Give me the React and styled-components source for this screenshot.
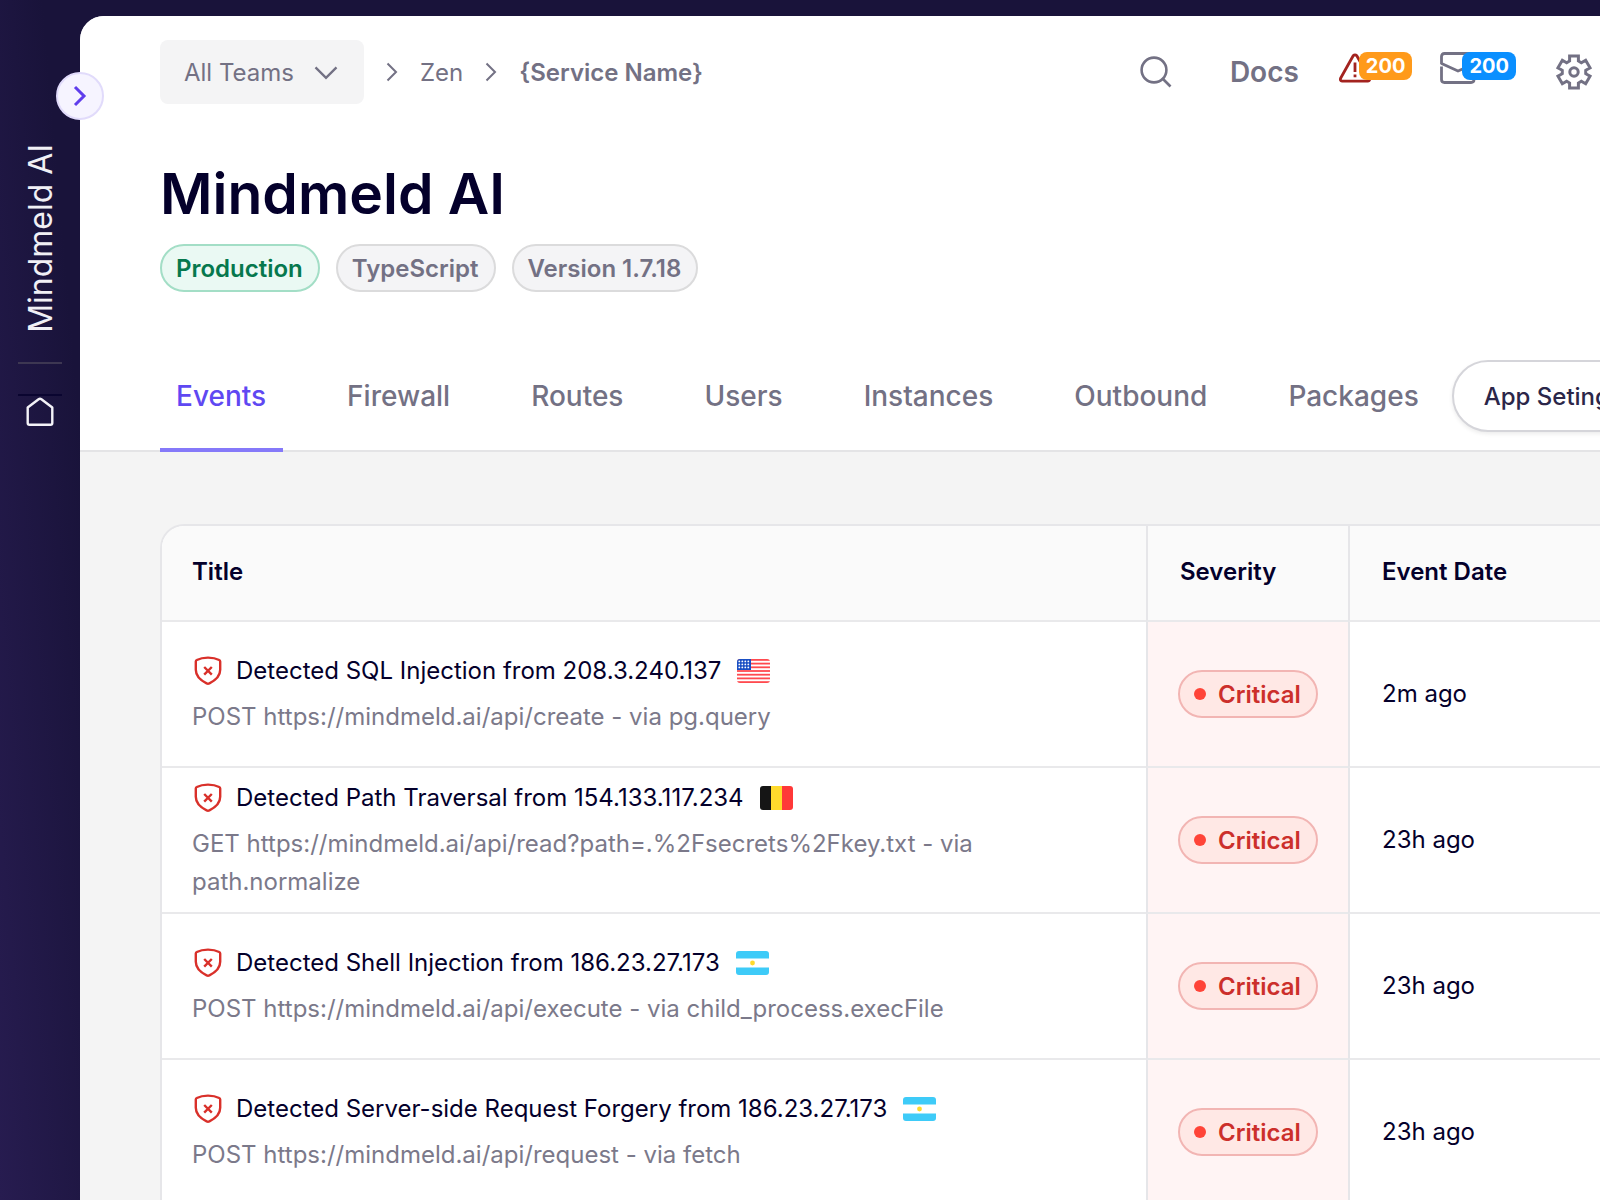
import React from "react";
import styled, { createGlobalStyle, css } from "styled-components";

const GlobalStyle = createGlobalStyle`
  *, *::before, *::after { box-sizing: border-box; }
  html, body { margin: 0; }
  body {
    font-family: Inter, "Liberation Sans", sans-serif;
    font-size: 24px;
    color: #04002b;
    overflow: hidden;
  }
  button, select { font: inherit; color: inherit; margin: 0; }
  svg { display: block; flex: none; }
`;

const Shell = styled.div`
  display: grid;
  grid-template-columns: 80px minmax(0, 1fr);
  height: 100vh;
  overflow: hidden;
  background: #19133a;
`;

const Sidebar = styled.aside`
  position: relative;
  z-index: 1;
  display: flex;
  flex-direction: column;
  align-items: center;
  padding-top: 144px;
  background: linear-gradient(265deg, #19133a 20%, #271c50 100%);
`;

const Toggle = styled.button`
  position: absolute;
  top: 72px;
  right: -24px;
  width: 48px;
  height: 48px;
  padding: 0;
  display: grid;
  place-items: center;
  border: 2px solid #e1dbfb;
  border-radius: 50%;
  background: #f6f4ff;
  color: #5f3dec;
`;

const Workspace = styled.div`
  writing-mode: vertical-rl;
  transform: rotate(180deg);
  padding-right: 2px;
  font-size: 32px;
  line-height: 40px;
  color: #f1f0f5;
`;

const SideRule = styled.hr`
  width: 44px;
  height: 2px;
  margin: 29px 0 30px;
  border: 0;
  background: #3d3752;
`;

const HomeLink = styled.a`
  display: grid;
  justify-items: center;
  width: 44px;
  padding-top: 1px;
  border-top: 2px solid #0a0530;
  color: #f4f3f8;
`;

const Main = styled.main`
  margin-top: 16px;
  min-width: 0;
  overflow: hidden;
  border-top-left-radius: 24px;
  background: #f4f4f4;
`;

const Top = styled.header`
  padding: 24px 0 0 80px;
  background: #ffffff;
  border-bottom: 2px solid #e4e4e6;
`;

const Bar = styled.div`
  display: flex;
  align-items: center;
  justify-content: space-between;
  padding-right: 8px;
  color: #737184;
`;

const Crumbs = styled.nav`
  display: flex;
  align-items: center;
  gap: 22px;
`;

const Crumb = styled.a`
  color: inherit;
  text-decoration: none;
  font-weight: ${(p) => (p.$current ? 600 : 400)};
`;

const TeamPicker = styled.label`
  display: grid;
  align-items: center;
  > * { grid-area: 1 / 1; }
  > svg { justify-self: end; margin-right: 24px; pointer-events: none; }
`;

const TeamSelect = styled.select`
  appearance: none;
  height: 64px;
  padding: 0 70px 0 24px;
  border: 0;
  border-radius: 8px;
  background: #f4f4f5;
`;

const Tools = styled.div`
  display: flex;
  align-items: center;
  gap: 40px;
`;

const DocsLink = styled.a`
  padding-left: 18px;
  color: inherit;
  text-decoration: none;
  font-size: 28px;
  font-weight: 600;
`;

const IconButton = styled.button`
  display: flex;
  align-items: flex-start;
  padding: 0;
  border: 0;
  background: none;
  color: inherit;
`;

const Notices = styled.div`
  display: flex;
  gap: 28px;
`;

const AlertButton = styled(IconButton)`
  color: #a3231f;
`;

const Count = styled.span`
  height: 28px;
  padding: 0 7px;
  margin: 0 0 12px -${(p) => p.$overlap}px;
  border-radius: 8px;
  background: ${(p) => p.$bg};
  color: #ffffff;
  font-size: 20px;
  line-height: 28px;
  font-weight: 700;
`;

const Title = styled.h1`
  margin: 56px 0 16px;
  font-size: 57px;
  line-height: 68px;
  font-weight: 600;
`;

const Pills = styled.div`
  display: flex;
  gap: 16px;
`;

const tones = {
  green: css`color: #06784d; background: #eaf9f3; border-color: #a3dec6;`,
  grey: css`color: #737184; background: #f4f4f6; border-color: #dbdbdc;`,
  red: css`color: #cc2f2b; background: #ffe8e5; border-color: #f2b5b3;`,
};

const Pill = styled.span`
  display: inline-flex;
  align-items: center;
  gap: 12px;
  height: 48px;
  padding: 0 15px 0 14px;
  border: 2px solid;
  border-radius: 24px;
  font-weight: 600;
  white-space: nowrap;
  ${(p) => tones[p.$tone]}
`;

const Dot = styled.i`
  width: 12px;
  height: 12px;
  border-radius: 50%;
  background: #ff4438;
`;

const TabRow = styled.div`
  display: flex;
  align-items: flex-start;
  gap: 16px;
  margin-top: 68px;
  margin-bottom: -2px;
  overflow: hidden;
`;

const Tabs = styled.nav`
  display: flex;
  flex: none;
  gap: 48px;
`;

const Tab = styled.a`
  height: 92px;
  padding: 0 17px 0 16px;
  font-size: 28px;
  line-height: 72px;
  font-weight: 500;
  color: ${(p) => (p.$active ? "#5f48f2" : "#737184")};
  text-decoration: none;
  border-bottom: 4px solid ${(p) => (p.$active ? "#8579f9" : "transparent")};
`;

const SettingsButton = styled.button`
  flex: none;
  height: 72px;
  padding: 0 30px;
  border: 2px solid #d5d5da;
  border-radius: 36px;
  background: #ffffff;
  color: #2b2649;
  font-weight: 500;
  box-shadow: 0 2px 4px rgba(0, 0, 0, 0.08);
`;

const Body = styled.section`
  padding: 72px 0 0 80px;
`;

const Card = styled.div`
  overflow: hidden;
  border: 2px solid #e6e6e9;
  border-width: 2px 0 0 2px;
  border-top-left-radius: 24px;
  background: #ffffff;
`;

const Table = styled.table`
  width: 100%;
  table-layout: fixed;
  border-collapse: separate;
  border-spacing: 0;
`;

const HeadCell = styled.th`
  width: ${(p) => p.$width || "auto"};
  height: 96px;
  padding: 0 30px 4px;
  text-align: left;
  font-weight: 600;
  background: #fafafa;
  border-bottom: 2px solid #e9e9eb;
  & + & {
    padding-left: 32px;
    border-left: 2px solid #e6e6e9;
  }
`;

const Cell = styled.td`
  height: 146px;
  padding: 0 30px;
  vertical-align: middle;
  background: #ffffff;
  border-bottom: 2px solid #e9e9eb;
`;

const SeverityCell = styled(Cell)`
  background: #fff4f4;
  border-left: 2px solid #e6e6e9;
`;

const DateCell = styled(Cell)`
  padding: 0 30px 2px 32px;
  border-left: 2px solid #e6e6e9;
`;

const EventTitle = styled.div`
  display: flex;
  align-items: center;
  gap: 12px;
  line-height: 38px;
`;

const EventDetail = styled.div`
  margin-top: 8px;
  line-height: 38px;
  color: #7b798a;
`;

const Chevron = ({ size = 24, d, width = 2 }) => (
  <svg width={size} height={size} viewBox="0 0 24 24" fill="none" stroke="currentColor" strokeWidth={width}>
    <path d={d} />
  </svg>
);

const CrumbArrow = () => (
  <svg width="12" height="20" viewBox="0 0 12 20" fill="none" stroke="currentColor" strokeWidth="2">
    <path d="M1.5 1.5 L10 10 L1.5 18.5" />
  </svg>
);

const HomeIcon = () => (
  <svg width="28" height="30" viewBox="0 0 28 30" fill="none" stroke="currentColor" strokeWidth="2.4" strokeLinejoin="round">
    <path d="M1.7 10.5 L12.6 2.2 Q14 1.2 15.4 2.2 L26.3 10.5 V26 Q26.3 27.8 24.5 27.8 H3.5 Q1.7 27.8 1.7 26 Z" />
  </svg>
);

const SearchIcon = () => (
  <svg width="32" height="32" viewBox="0 0 32 32" fill="none" stroke="currentColor" strokeWidth="2.6">
    <circle cx="14" cy="14" r="12.4" />
    <path d="M23 23 L30.5 30.5" />
  </svg>
);

const AlertIcon = () => (
  <svg width="32" height="32" viewBox="0 0 32 32" fill="none" stroke="currentColor" strokeWidth="2.8" strokeLinejoin="round">
    <path d="M14.2 3.8 Q16 1.8 17.8 3.8 L30.4 26.2 Q31.2 28.8 28.8 29.2 H3.2 Q.8 28.8 1.6 26.2 Z" />
    <path d="M16 10.5 V20 M16 22.5 V25.3" />
  </svg>
);

const MailIcon = () => (
  <svg width="36" height="32" viewBox="0 0 36 32" fill="none" stroke="currentColor" strokeWidth="2.8">
    <path d="M1.5 12 V4.5 Q1.5 1.5 4.5 1.5 H31 Q34 1.5 34 4.5 V12 L18 19 L1 11.2" />
    <path d="M1.5 14.5 V27.5 Q1.5 30.5 4.5 30.5 H31 Q34 30.5 34 27.5 V14.5" />
  </svg>
);

const toothPath = Array.from({ length: 6 }, (_, i) => {
  const turn = (i * Math.PI) / 3;
  return [[-4.4, -11], [-4.4, -16], [4.4, -16], [4.4, -11]]
    .map(([x, y]) => {
      const px = 18 + x * Math.cos(turn) - y * Math.sin(turn);
      const py = 18 + x * Math.sin(turn) + y * Math.cos(turn);
      return `${px.toFixed(2)} ${py.toFixed(2)}`;
    })
    .join(" L");
}).join(" L");

const GearIcon = () => (
  <svg width="36" height="36" viewBox="0 0 36 36" fill="none" stroke="currentColor" strokeWidth="3">
    <path d={`M${toothPath} Z`} />
    <circle cx="18" cy="18" r="4.2" />
  </svg>
);

const ShieldIcon = () => (
  <svg width="32" height="32" viewBox="0 0 32 32" fill="none" stroke="#d9302a" strokeWidth="2.4" strokeLinejoin="round">
    <path d="M16 2.6 C20.5 2.6 24.6 3.6 27.2 5 Q28.2 5.5 28.2 6.6 V14.8 C28.2 21 23.4 25.4 17.4 28.4 Q16 29.1 14.6 28.4 C8.6 25.4 3.8 21 3.8 14.8 V6.6 Q3.8 5.5 4.8 5 C7.4 3.6 11.5 2.6 16 2.6 Z" />
    <path d="M12.2 12 L19.8 19.6 M19.8 12 L12.2 19.6" />
  </svg>
);

const Flag = styled.svg.attrs({ width: 33, height: 24, viewBox: "0 0 33 24", role: "img" })`
  margin-left: 4px;
  border-radius: 3px;
`;

const flags = {
  us: (
    <Flag aria-label="United States">
      <rect width="33" height="24" fill="#ffffff" />
      {[0, 1, 2, 3, 4, 5, 6].map((n) => (
        <rect key={n} y={n * 3.7} width="33" height="1.8" fill="#ff4a4f" />
      ))}
      <rect width="14" height="11" fill="#1a4fc4" />
      {[2, 5, 8].map((y) =>
        [2, 5, 8, 11].map((x) => <circle key={`${x}-${y}`} cx={x + 0.3} cy={y + 0.4} r="0.9" fill="#ffffff" />)
      )}
    </Flag>
  ),
  be: (
    <Flag aria-label="Belgium">
      <rect width="11" height="24" fill="#151515" />
      <rect x="11" width="11" height="24" fill="#ffda2c" />
      <rect x="22" width="11" height="24" fill="#ff3838" />
    </Flag>
  ),
  ar: (
    <Flag aria-label="Argentina">
      <rect width="33" height="24" fill="#ffffff" />
      <rect width="33" height="7.5" fill="#3ecbf8" />
      <rect y="16.5" width="33" height="7.5" fill="#3ecbf8" />
      <circle cx="16.5" cy="12" r="2.4" fill="#ffda2c" />
    </Flag>
  ),
};

const tabs = ["Events", "Firewall", "Routes", "Users", "Instances", "Outbound", "Packages"];

const events = [
  { title: "Detected SQL Injection from 208.3.240.137", flag: "us", detail: "POST https://mindmeld.ai/api/create - via pg.query", date: "2m ago" },
  { title: "Detected Path Traversal from 154.133.117.234", flag: "be", detail: "GET https://mindmeld.ai/api/read?path=.%2Fsecrets%2Fkey.txt - via path.normalize", date: "23h ago" },
  { title: "Detected Shell Injection from 186.23.27.173", flag: "ar", detail: "POST https://mindmeld.ai/api/execute - via child_process.execFile", date: "23h ago" },
  { title: "Detected Server-side Request Forgery from 186.23.27.173", flag: "ar", detail: "POST https://mindmeld.ai/api/request - via fetch", date: "23h ago" },
];

export default function App() {
  return (
    <>
      <GlobalStyle />
      <Shell>
        <Sidebar>
          <Toggle aria-label="Expand sidebar">
            <Chevron d="M7 3 L16 12 L7 21" width={3} />
          </Toggle>
          <Workspace>Mindmeld AI</Workspace>
          <SideRule />
          <HomeLink href="#home" aria-label="Home">
            <HomeIcon />
          </HomeLink>
        </Sidebar>
        <Main>
          <Top>
            <Bar>
              <Crumbs aria-label="Breadcrumb">
                <TeamPicker>
                  <TeamSelect aria-label="Team" defaultValue="all">
                    <option value="all">All Teams</option>
                  </TeamSelect>
                  <Chevron size={28} d="M3 8 L12 17 L21 8" />
                </TeamPicker>
                <CrumbArrow />
                <Crumb href="#zen">Zen</Crumb>
                <CrumbArrow />
                <Crumb href="#service" $current>{"{Service Name}"}</Crumb>
              </Crumbs>
              <Tools>
                <IconButton aria-label="Search"><SearchIcon /></IconButton>
                <DocsLink href="#docs">Docs</DocsLink>
                <Notices>
                  <AlertButton aria-label="Alerts">
                    <AlertIcon />
                    <Count $bg="#ff9a1a" $overlap={12}>200</Count>
                  </AlertButton>
                  <IconButton aria-label="Messages">
                    <MailIcon />
                    <Count $bg="#0a8fff" $overlap={14}>200</Count>
                  </IconButton>
                </Notices>
                <IconButton aria-label="Settings"><GearIcon /></IconButton>
              </Tools>
            </Bar>
            <Title>Mindmeld AI</Title>
            <Pills>
              <Pill $tone="green">Production</Pill>
              <Pill $tone="grey">TypeScript</Pill>
              <Pill $tone="grey">Version 1.7.18</Pill>
            </Pills>
            <TabRow>
              <Tabs aria-label="Sections">
                {tabs.map((name, i) => (
                  <Tab key={name} href={`#${name.toLowerCase()}`} $active={i === 0}>{name}</Tab>
                ))}
              </Tabs>
              <SettingsButton>App Setings</SettingsButton>
            </TabRow>
          </Top>
          <Body>
            <Card>
              <Table>
                <thead>
                  <tr>
                    <HeadCell>Title</HeadCell>
                    <HeadCell $width="202px">Severity</HeadCell>
                    <HeadCell $width="252px">Event Date</HeadCell>
                  </tr>
                </thead>
                <tbody>
                  {events.map((event) => (
                    <tr key={event.title}>
                      <Cell>
                        <EventTitle>
                          <ShieldIcon />
                          {event.title}
                          {flags[event.flag]}
                        </EventTitle>
                        <EventDetail>{event.detail}</EventDetail>
                      </Cell>
                      <SeverityCell>
                        <Pill $tone="red"><Dot />Critical</Pill>
                      </SeverityCell>
                      <DateCell>{event.date}</DateCell>
                    </tr>
                  ))}
                </tbody>
              </Table>
            </Card>
          </Body>
        </Main>
      </Shell>
    </>
  );
}
